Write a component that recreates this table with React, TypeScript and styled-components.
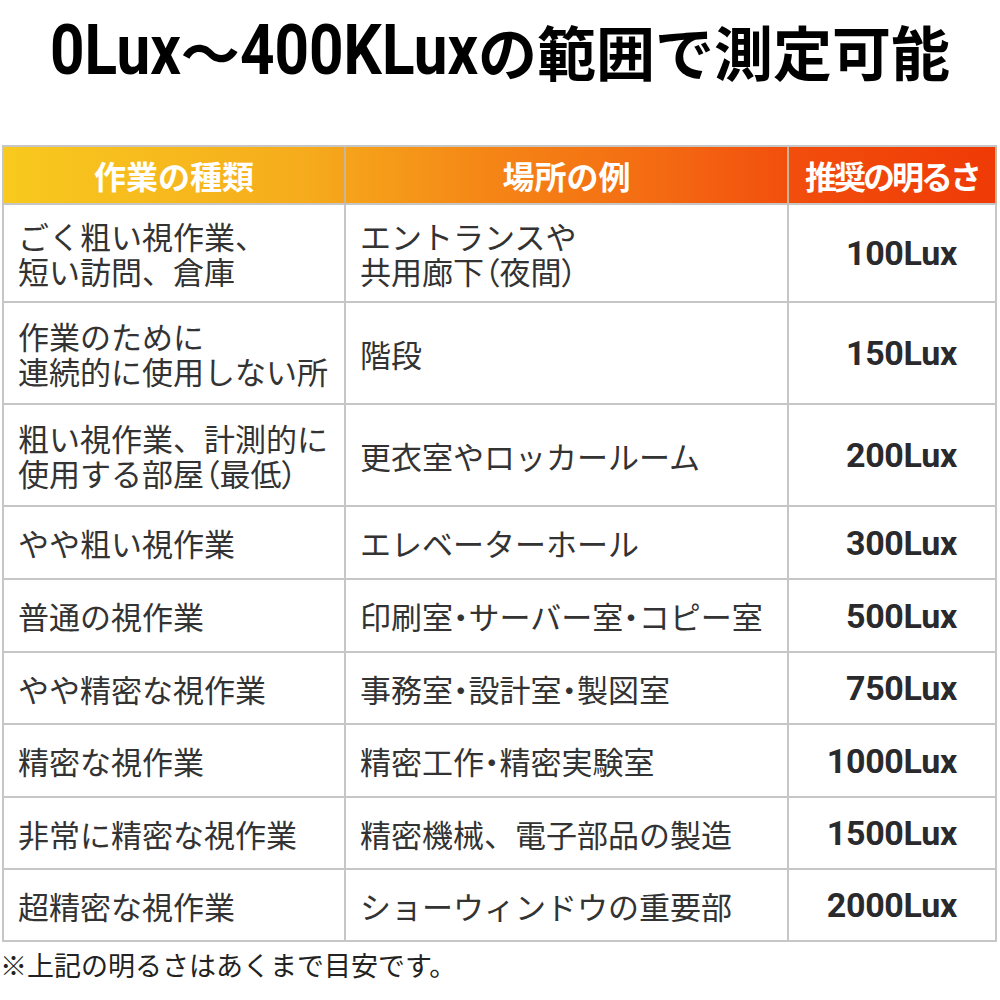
import React, { useLayoutEffect, useRef, useState } from "react";
import styled, { createGlobalStyle } from "styled-components";

const GlobalStyle = createGlobalStyle`
  html, body {
    margin: 0;
    padding: 0;
    background: #ffffff;
  }
  body {
    font-family: "Noto Sans CJK JP", "Noto Sans", sans-serif;
    color: #333333;
  }
`;

const Page = styled.div`
  width: 1000px;
  height: 1000px;
  display: flex;
  flex-direction: column;
  overflow: hidden;
`;

const Title = styled.h1`
  margin: 0;
  height: 100px;
  display: flex;
  align-items: center;
  justify-content: center;
  font-family: "Noto Sans CJK JP", sans-serif;
  font-weight: 700;
  font-size: 59px;
  line-height: 1;
  color: #000;
  white-space: nowrap;
`;

const LatinBox = styled.span`
  display: inline-block;
  font-family: "Roboto", "Liberation Sans", sans-serif;
  font-weight: 700;
  font-size: 70px;
  line-height: 1;
  transform-origin: 0 50%;
  transform: scaleX(0.86);
`;

const SCALE = 0.86;

function Condensed({ children }: { children: string }) {
  const ref = useRef<HTMLSpanElement>(null);
  const [shrink, setShrink] = useState(0);
  useLayoutEffect(() => {
    if (ref.current) {
      setShrink(ref.current.offsetWidth * (1 - SCALE));
    }
  }, []);
  return (
    <LatinBox ref={ref} style={{ marginRight: -shrink }}>
      {children}
    </LatinBox>
  );
}

const Table = styled.div`
  margin: 45px 0 0 2px;
  width: 995px;
  display: grid;
  grid-template-columns: 342px 443px 1fr;
  grid-template-rows: 58px 98px 102px 102px 73px 73px 72px 73px 72px 72px;
  border-top: 2px solid #c6c6c6;
  border-left: 2px solid #c6c6c6;
  box-sizing: border-box;
`;

const HeadCell = styled.div<{ $offset: number; $tight?: boolean }>`
  box-sizing: border-box;
  border-right: 2px solid #c9b59a;
  border-bottom: 2px solid #c6c6c6;
  display: flex;
  align-items: center;
  justify-content: center;
  color: #ffffff;
  font-weight: 700;
  font-size: 32px;
  letter-spacing: ${(p) => (p.$tight ? "-3px" : "0")};
  background-image: linear-gradient(
    90deg,
    #f8c91e 0%,
    #f6ac1c 30%,
    #f58716 48%,
    #f46a12 66%,
    #f24e0d 79%,
    #ef3a06 100%
  );
  background-size: 995px 100%;
  background-position: ${(p) => -p.$offset}px 0;
`;

const Cell = styled.div<{ $align?: "left" | "right" }>`
  box-sizing: border-box;
  border-right: 2px solid #c6c6c6;
  border-bottom: 2px solid #c6c6c6;
  display: flex;
  flex-direction: column;
  justify-content: center;
  align-items: ${(p) => (p.$align === "right" ? "flex-end" : "flex-start")};
  padding: ${(p) => (p.$align === "right" ? "0 38px 0 0" : "0 0 0 14px")};
  background: #ffffff;
`;

const Line = styled.span`
  font-size: 31px;
  line-height: 35px;
  color: #333333;
  white-space: nowrap;
`;

const Narrow = styled.span`
  font-feature-settings: "palt";
`;

const Lux = styled.span`
  font-family: "Roboto", "Liberation Sans", sans-serif;
  font-weight: 700;
  font-size: 34px;
  color: #2a2a2d;
  letter-spacing: -0.3px;
`;

const Note = styled.p`
  margin: 3px 0 0 0;
  font-size: 27px;
  line-height: 40px;
  color: #222222;
`;

type Row = { kind: string[]; place: string[]; lux: string };

const rows: Row[] = [
  { kind: ["ごく粗い視作業、", "短い訪問、倉庫"], place: ["エントランスや", "共用廊下（夜間）"], lux: "100Lux" },
  { kind: ["作業のために", "連続的に使用しない所"], place: ["階段"], lux: "150Lux" },
  { kind: ["粗い視作業、計測的に", "使用する部屋（最低）"], place: ["更衣室やロッカールーム"], lux: "200Lux" },
  { kind: ["やや粗い視作業"], place: ["エレベーターホール"], lux: "300Lux" },
  { kind: ["普通の視作業"], place: ["印刷室・サーバー室・コピー室"], lux: "500Lux" },
  { kind: ["やや精密な視作業"], place: ["事務室・設計室・製図室"], lux: "750Lux" },
  { kind: ["精密な視作業"], place: ["精密工作・精密実験室"], lux: "1000Lux" },
  { kind: ["非常に精密な視作業"], place: ["精密機械、電子部品の製造"], lux: "1500Lux" },
  { kind: ["超精密な視作業"], place: ["ショーウィンドウの重要部"], lux: "2000Lux" },
];

const renderText = (text: string) =>
  text.split(/([（）・])/).map((part, i) =>
    /^[（）・]$/.test(part) ? <Narrow key={i}>{part}</Narrow> : <React.Fragment key={i}>{part}</React.Fragment>
  );

export default function App() {
  return (
    <Page>
      <GlobalStyle />
      <Title>
        <Condensed>0Lux</Condensed>～<Condensed>400KLux</Condensed>の範囲で測定可能
      </Title>
      <Table>
        <HeadCell $offset={0}>作業の種類</HeadCell>
        <HeadCell $offset={342}>場所の例</HeadCell>
        <HeadCell $offset={785} $tight>推奨の明るさ</HeadCell>
        {rows.map((r, i) => (
          <React.Fragment key={i}>
            <Cell>
              {r.kind.map((l, j) => (
                <Line key={j}>{renderText(l)}</Line>
              ))}
            </Cell>
            <Cell>
              {r.place.map((l, j) => (
                <Line key={j}>{renderText(l)}</Line>
              ))}
            </Cell>
            <Cell $align="right">
              <Lux>{r.lux}</Lux>
            </Cell>
          </React.Fragment>
        ))}
      </Table>
      <Note>※上記の明るさはあくまで目安です。</Note>
    </Page>
  );
}
